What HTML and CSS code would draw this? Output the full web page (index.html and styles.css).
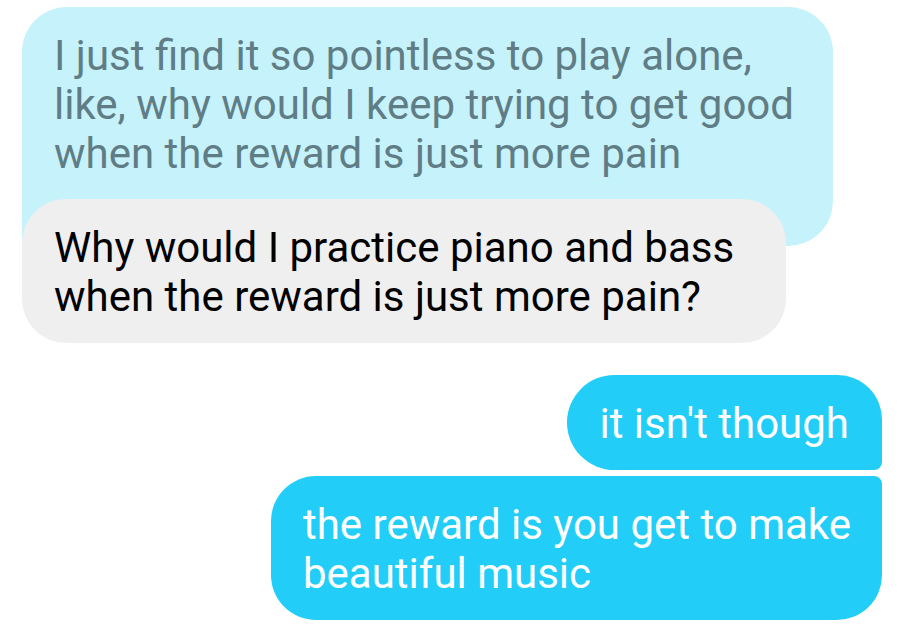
FILE: index.html
```html
<!DOCTYPE html>
<html>
<head>
<meta charset="utf-8">
<link rel="stylesheet" href="styles.css">
</head>
<body>
<div class="chat">
  <div class="thread-in">
    <div class="quote">I just find it so pointless to play alone,<br>like, why would I keep trying to get good<br>when the reward is just more pain</div>
    <div class="bubble in">Why would I practice piano and bass<br>when the reward is just more pain?</div>
  </div>
  <div class="thread-out">
    <div class="bubble out first">it isn't though</div>
    <div class="bubble out last">the reward is you get to make<br>beautiful music</div>
  </div>
</div>
</body>
</html>
```

FILE: styles.css
```css
html, body {
  margin: 0;
  padding: 0;
  background: #ffffff;
}

.chat {
  padding: 7px 20px 0 22px;
  font-family: Roboto, "Noto Sans", sans-serif;
  font-size: 42px;
  line-height: 49px;
}

.thread-in {
  display: flex;
  flex-direction: column;
  align-items: flex-start;
}

.quote {
  box-sizing: border-box;
  width: 811px;
  padding: 24px 32px 68px 32px;
  background: #c5f2fb;
  color: #607d86;
  border-radius: 45px 45px 45px 0;
  white-space: nowrap;
}

.bubble {
  box-sizing: border-box;
  padding: 24px 33px 22px 32px;
  white-space: nowrap;
}

.bubble.in {
  position: relative;
  width: 764px;
  margin-top: -47px;
  background: #efefef;
  color: #000000;
  border-radius: 44px;
}

.thread-out {
  margin-top: 32px;
  display: flex;
  flex-direction: column;
  align-items: flex-end;
  gap: 6px;
}

.bubble.out {
  background: #22cef7;
  color: #ffffff;
}

.bubble.first {
  border-radius: 48px 45px 8px 48px;
}

.bubble.last {
  width: 611px;
  border-radius: 45px 8px 45px 45px;
}
```
